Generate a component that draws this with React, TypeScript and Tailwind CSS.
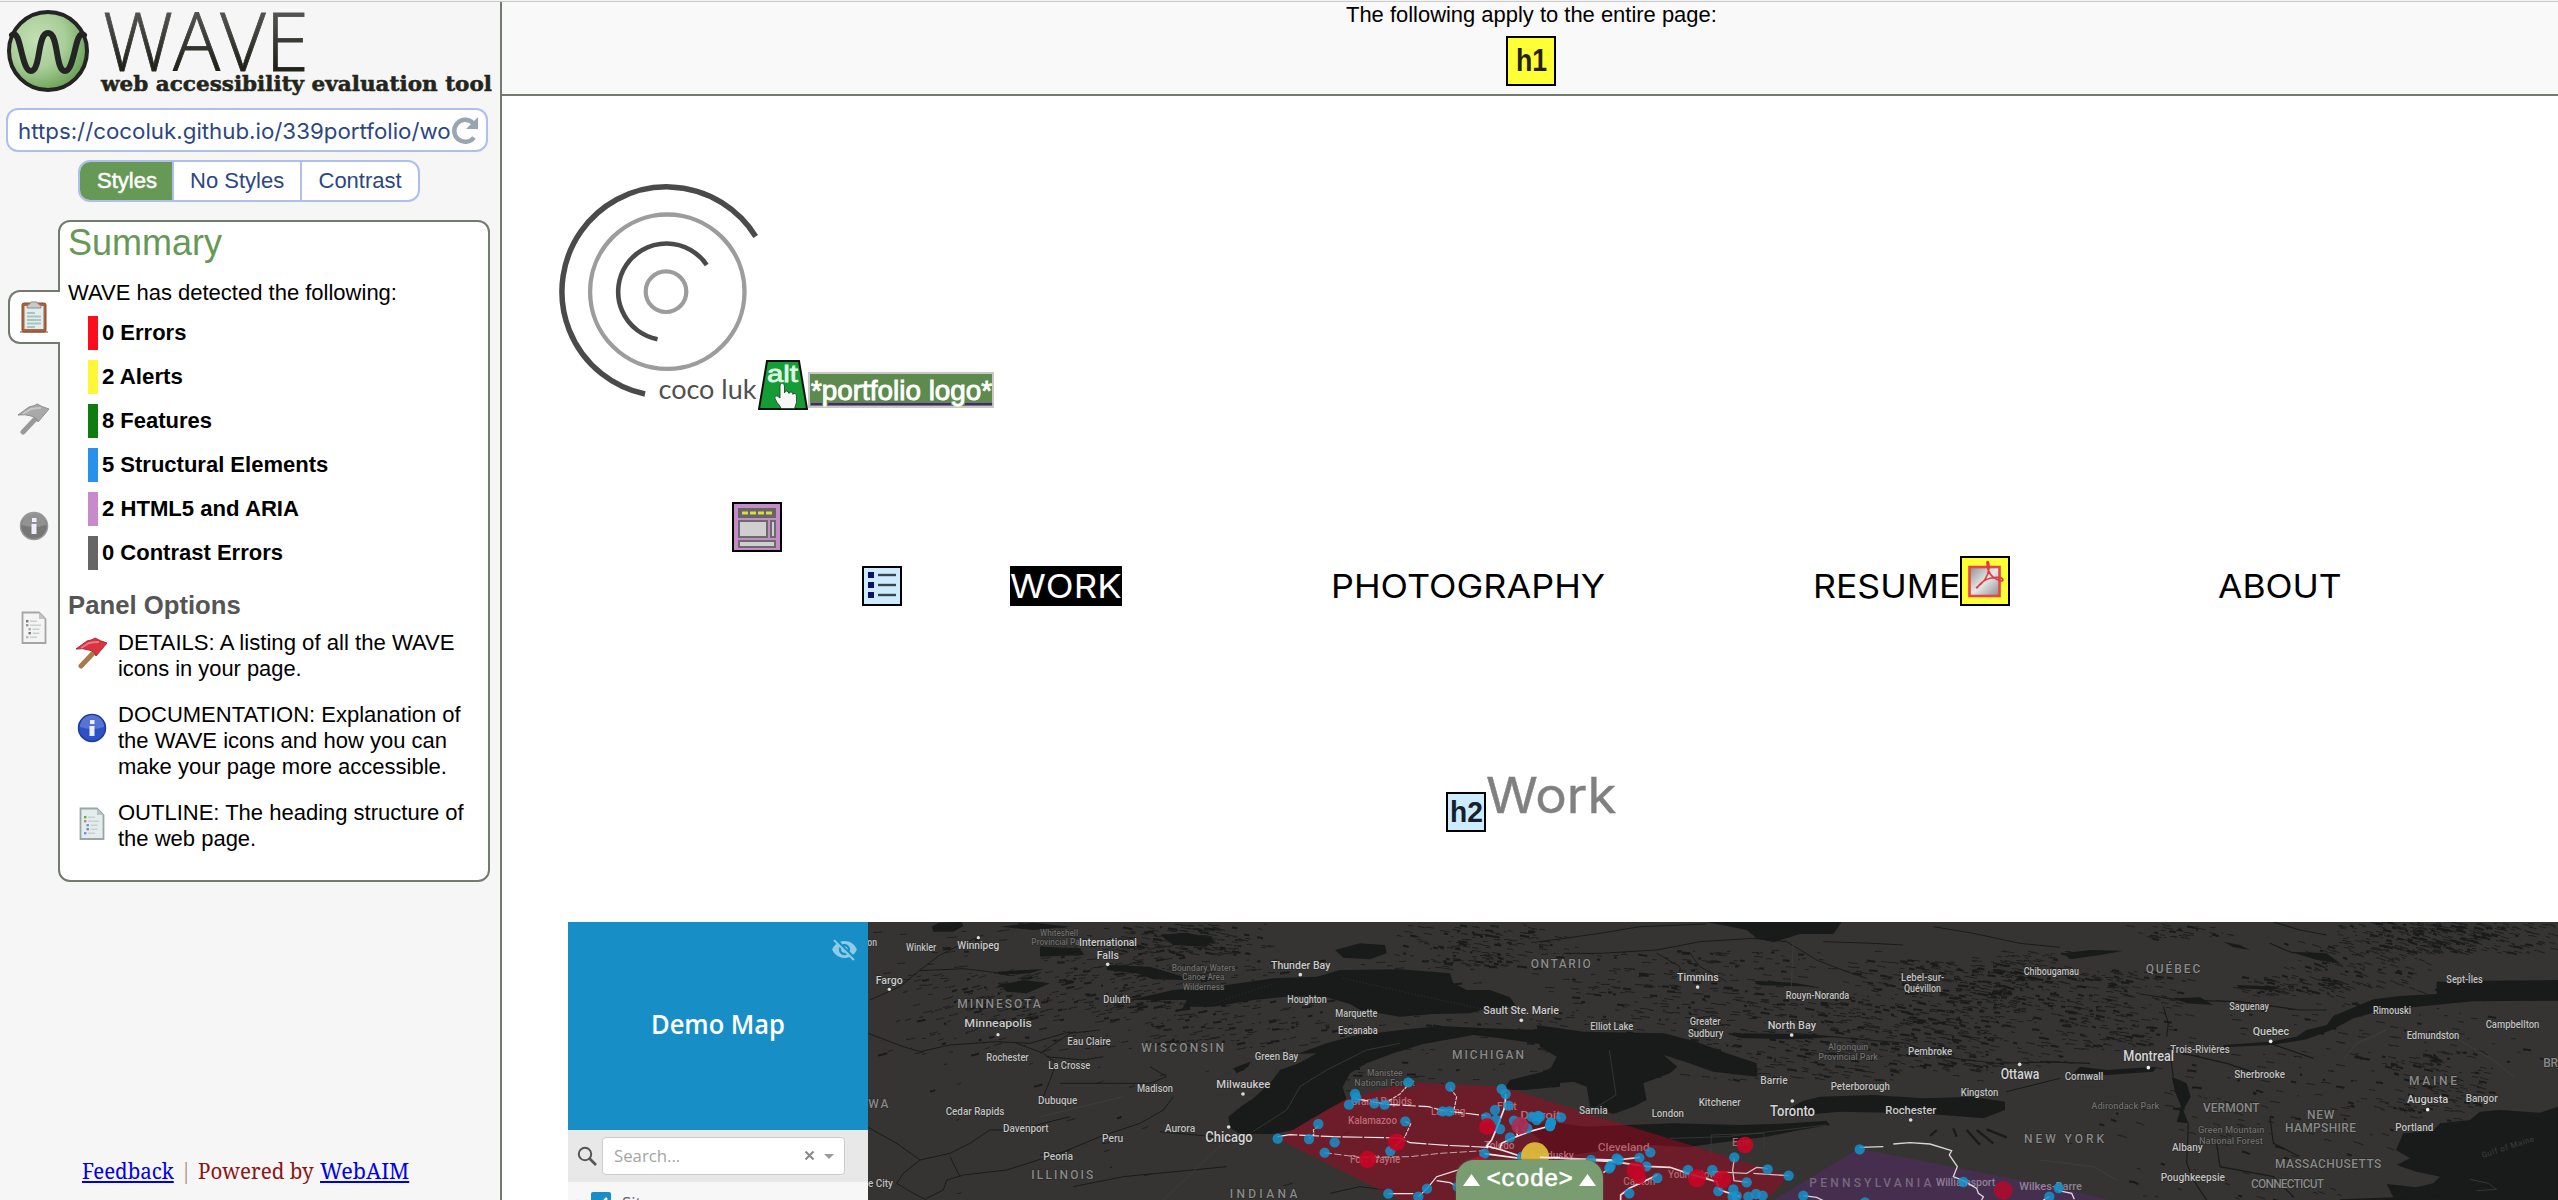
import { useLayoutEffect, useRef, useState } from 'react';
import { MdVisibilityOff } from 'react-icons/md';

/* Single line of text stretched horizontally to an exact width. */
function FitText({ text, width, className = '' }: { text: string; width: number; className?: string }) {
  const ref = useRef<HTMLSpanElement>(null);
  const [scale, setScale] = useState(1);
  useLayoutEffect(() => {
    if (ref.current) setScale(width / ref.current.offsetWidth);
  }, [text, width]);
  return (
    <span className="block shrink-0 whitespace-nowrap" style={{ width }}>
      <span ref={ref} className={`inline-block origin-left ${className}`} style={{ transform: `scaleX(${scale})` }}>
        {text}
      </span>
    </span>
  );
}

function WaveLogo() {
  return (
    <svg width="500" height="102" viewBox="0 0 500 102" className="block">
      <defs>
        <radialGradient id="ball" cx="35%" cy="35%" r="75%">
          <stop offset="0" stopColor="#c3dfb4" />
          <stop offset="0.5" stopColor="#a9cd98" />
          <stop offset="1" stopColor="#5f9a4c" />
        </radialGradient>
        <linearGradient id="word" x1="0" y1="0" x2="0" y2="1">
          <stop offset="0.25" stopColor="#555555" />
          <stop offset="0.75" stopColor="#22231a" />
        </linearGradient>
      </defs>
      <circle cx="48" cy="49" r="39" fill="url(#ball)" stroke="#242424" strokeWidth="4" />
      <path
        d="M12 33 C21 26 21 69 31 69 C41 69 37 31 48 31 C59 31 55 69 65 69 C75 69 75 26 84 33"
        fill="none"
        stroke="#242424"
        strokeWidth="6"
        strokeLinecap="round"
      />
      <text x="103" y="68.500" fontFamily="Open Sans" fontWeight="300" fontSize="82" fill="url(#word)" stroke="url(#word)" strokeWidth="0.800" textLength="206" lengthAdjust="spacingAndGlyphs">
        WAVE
      </text>
      <text x="101" y="89" fontFamily="DejaVu Serif" fontWeight="700" fontSize="21" fill="#24251b" stroke="#24251b" strokeWidth="0.500" textLength="391" lengthAdjust="spacingAndGlyphs">
        web accessibility evaluation tool
      </text>
    </svg>
  );
}

function Reload() {
  return (
    <svg width="28" height="30" viewBox="0 0 28 30" className="block shrink-0">
      <path d="M23 21.500A11 11 0 1 1 22 7" fill="none" stroke="#98a5b3" strokeWidth="4.500" />
      <path d="M27 1V13H15Z" fill="#98a5b3" />
    </svg>
  );
}

function Clipboard() {
  return (
    <svg width="30" height="34" viewBox="0 0 30 34" className="block">
      <path d="M1 32H29" stroke="#aaa" strokeWidth="2" />
      <rect x="3" y="3" width="24" height="29" rx="2" fill="#a9643f" stroke="#8a4b30" />
      <rect x="5.500" y="6" width="19" height="23" fill="#e3eeec" />
      <path d="M8 13h8M8 16.500h14M8 20h14M8 23.500h14M8 27h8" stroke="#a9c5c3" strokeWidth="1.800" />
      <path d="M8 8C8 4 11 5 12 2H18C19 5 22 4 22 8Z" fill="#c9c9cc" stroke="#8b8b90" />
    </svg>
  );
}

function Flag({ cloth, edge, pole }: { cloth: string; edge: string; pole: string }) {
  return (
    <svg width="34" height="32" viewBox="0 0 34 32" className="block">
      <path d="M23 11 L6 29" stroke={pole} strokeWidth="5" strokeLinecap="round" />
      <path d="M1 12 L12 4 Q18 3 20 1 Q25 4 32 6 L21 19 Q20 14 14 13 Q8 11 1 12Z" fill={cloth} stroke={edge} strokeWidth="1" strokeLinejoin="round" />
      <path d="M6 11 L14 6 Q19 5 24 5" fill="none" stroke="#fff" strokeOpacity="0.35" strokeWidth="2" />
    </svg>
  );
}

function Info({ fill, edge }: { fill: string; edge: string }) {
  return (
    <svg width="30" height="30" viewBox="0 0 30 30" className="block">
      <circle cx="15" cy="15" r="13.500" fill={fill} stroke={edge} strokeWidth="1.500" />
      <path d="M3 14A12 12 0 0 1 27 14Q15 18 3 14Z" fill="#fff" fillOpacity="0.2" />
      <path d="M13 7h4.500v4H13zM12.500 13h5v10h-5z" fill="#eef" />
    </svg>
  );
}

function Doc({ color }: { color: boolean }) {
  const marks = color ? ['#5db04e', '#d97a6c', '#6b93e6', '#888', '#6b93e6'] : ['#777', '#999', '#aaa', '#777', '#bbb'];
  return (
    <svg width="26" height="34" viewBox="0 0 26 34" className="block">
      <path d="M1.500 1.500H18L24.500 8V32H1.500Z" fill={color ? '#e4eded' : '#f4f4f4'} stroke={color ? '#98a7a5' : '#a5a5a5'} strokeWidth="1.800" />
      <path d="M18 1.500V8H24.500Z" fill={color ? '#b5c6c4' : '#c4c4c4'} />
      {marks.map((m, i) => (
        <g key={i}>
          <rect x={i > 1 && i < 4 ? 7.5 : 5} y={9 + i * 4} width="2.400" height="2.400" fill={m} />
          <rect x={i > 1 && i < 4 ? 11.5 : 9} y={9.5 + i * 4} width={i === 1 ? 11 : 7} height="1.500" fill="#c9d0d0" />
        </g>
      ))}
    </svg>
  );
}

function AltIcon() {
  return (
    <svg width="50" height="50" viewBox="0 0 50 50" className="block shrink-0">
      <path d="M9 1H41L49 49H1Z" fill="#169c37" stroke="#111" strokeWidth="2" />
      <text x="9" y="22" fontFamily="Liberation Sans" fontWeight="400" fontSize="24" fill="#dff5e3" stroke="#dff5e3" strokeWidth="0.800" textLength="31" lengthAdjust="spacingAndGlyphs">
        alt
      </text>
      <path
        d="M22 26q0-3 2-3t2.500 3v7q0-2 2-2t2.500 2.500q0-1.500 2-1.500t2 2.500q0-1.500 2-1t1.500 3v6q-1 3-2 6H23q-1-3-4-6-3-5-2-6.500 2-1 5 2Z"
        fill="#f7f7f7"
        stroke="#1b3a20"
        strokeWidth="0.800"
      />
    </svg>
  );
}

function RegionIcon() {
  return (
    <svg width="50" height="50" viewBox="0 0 50 50" className="block shrink-0">
      <rect x="1" y="1" width="48" height="48" fill="#c58bc8" stroke="#000" strokeWidth="2" />
      <rect x="6" y="6" width="38" height="10" fill="#666" />
      <path d="M10 11h6M18 11h6M26 11h6M34 11h6" stroke="#dcdc3c" strokeWidth="3" />
      <g fill="#cfcfcf" stroke="#6b6b6b" strokeWidth="2">
        <rect x="7" y="19" width="28" height="16" />
        <rect x="39" y="19" width="4" height="16" />
        <rect x="7" y="39" width="36" height="6" />
      </g>
    </svg>
  );
}

function ListIcon() {
  return (
    <svg width="40" height="40" viewBox="0 0 40 40" className="block shrink-0">
      <rect x="1" y="1" width="38" height="38" fill="#cdebff" stroke="#000" strokeWidth="2" />
      {[9, 19, 29].map((y) => (
        <g key={y}>
          <rect x="6" y={y - 3} width="6" height="6" fill="#10106c" />
          <path d={`M16 ${y}h18`} stroke="#3c4246" strokeWidth="2.400" />
        </g>
      ))}
    </svg>
  );
}

function PdfIcon() {
  return (
    <svg width="50" height="50" viewBox="0 0 50 50" className="block shrink-0">
      <defs>
        <linearGradient id="pdf" x1="0" y1="0" x2="1" y2="1">
          <stop offset="0" stopColor="#8c8c8c" />
          <stop offset="0.5" stopColor="#e8e8e8" />
          <stop offset="1" stopColor="#8c8c8c" />
        </linearGradient>
      </defs>
      <rect x="1" y="1" width="48" height="48" fill="#ffff36" stroke="#000" strokeWidth="2" />
      <rect x="9.500" y="11" width="30" height="29" fill="url(#pdf)" stroke="#e0484d" strokeWidth="2.600" />
      <path d="M16 32Q28 24 29 12Q29 4 27 6Q27 16 33 21Q42 27 43 24Q42 20 31 22Q22 24 17 32" fill="none" stroke="#dc3d45" strokeWidth="1.700" />
    </svg>
  );
}

function CocoLogo() {
  return (
    <svg width="202" height="228" viewBox="556 182 202 228" className="block shrink-0">
      <g fill="none">
        <path d="M755.700 236.500A104.700 104.700 0 1 0 645 394" stroke="#4a4a4a" strokeWidth="5.500" />
        <circle cx="667.300" cy="291.700" r="77.200" stroke="#9c9c9c" strokeWidth="4.300" />
        <path d="M706.700 265A48.300 48.300 0 1 0 657.500 339.200" stroke="#4a4a4a" strokeWidth="4.600" />
        <circle cx="666" cy="291.700" r="20.300" stroke="#9c9c9c" strokeWidth="4.200" />
      </g>
      <text x="658.500" y="398.500" fontFamily="Lato" fontSize="26" fill="#505050" textLength="98" lengthAdjust="spacingAndGlyphs">
        coco luk
      </text>
    </svg>
  );
}

/* ---- map ---- */

const LAND = '#353432';
const WATER = '#191b1a';

type Zone = [number, number, number, number, number, number];
/* x, y, width, height, dash count, slope */
const ZONES: Zone[] = [
  [868, 922, 200, 70, 40, -0.05],
  [900, 972, 170, 50, 110, -0.15],
  [880, 1000, 190, 60, 50, -0.15],
  [1040, 924, 190, 30, 90, 0.1],
  [1040, 945, 160, 65, 170, -0.1],
  [1150, 924, 110, 30, 130, 0.1],
  [1040, 1000, 330, 50, 230, -0.1],
  [1060, 960, 400, 30, 80, -0.05],
  [1400, 924, 160, 45, 170, 0.1],
  [1380, 1010, 240, 45, 70, 0.05],
  [1540, 950, 330, 75, 300, 0.05],
  [1640, 1000, 330, 80, 330, 0.1],
  [1840, 960, 230, 60, 320, 0.1],
  [1960, 950, 110, 60, 170, 0.1],
  [1850, 1020, 200, 50, 220, 0.1],
  [2040, 970, 140, 80, 260, 0.1],
  [2130, 924, 100, 15, 40, 0.1],
  [2330, 922, 228, 30, 340, 0.15],
  [2280, 940, 160, 50, 130, 0.2],
  [2230, 975, 110, 20, 80, 0.15],
  [2170, 1000, 380, 120, 160, 0.1],
  [2380, 1050, 110, 60, 150, 0.15],
  [2080, 1090, 330, 110, 80, 0.2],
  [1280, 1060, 260, 30, 30, 0],
  [868, 1050, 500, 150, 25, -0.2],
];

function terrain() {
  let s = 20177;
  const rnd = () => {
    s = (s * 1103515245 + 12345) % 2147483648;
    return s / 2147483648;
  };
  let thin = '';
  let thick = '';
  for (const [x, y, w, h, n, k] of ZONES) {
    for (let i = 0; i < n; i++) {
      const px = Math.round(x + ((rnd() + rnd()) / 2) * w * 1.2 - w * 0.1);
      const py = Math.round(y + rnd() * h);
      const len = 2 + rnd() * 8;
      const seg = `M${px} ${py + 0.5}l${(len / 2).toFixed(1)} ${((k * len) / 2 + rnd() - 0.5).toFixed(1)}l${(len / 2).toFixed(1)} ${(k * len).toFixed(1)}`;
      if (rnd() > 0.78) thick += seg;
      else thin += seg;
    }
  }
  return { thin, thick };
}
const DASHES = terrain();

type Label = [string, number, number, number, 'c' | 'b' | 'x' | 's' | 'p'];
/* text, left, baseline, width, style; three units to a pixel within each tile */
const SIZES = { c: 30, b: 35, x: 42, s: 36, p: 27 };
const FILLS = { c: '#c2c2c1', b: '#cbcbca', x: '#d6d6d5', s: '#8a8a89', p: '#6e6e6d' };

function Labels({ items }: { items: Label[] }) {
  return (
    <g fontFamily="Roboto" stroke="#222" strokeWidth="3" strokeLinejoin="round" paintOrder="stroke">
      {items.map(([t, x, y, w, k]) => (
        <text
          key={t + x + y}
          x={x}
          y={y}
          fontSize={SIZES[k]}
          fontWeight={500}
          fill={FILLS[k]}
          textLength={w}
          lengthAdjust={k === 's' ? 'spacing' : 'spacingAndGlyphs'}
        >
          {t}
        </text>
      ))}
    </g>
  );
}

const FAR_WEST: Label[] = [
  ['on', 952, 137, 29, 'c'],
  ['Winkler', 1068, 153, 91, 'c'],
  ['Winnipeg', 1222, 147, 126, 'b'],
  ['Fargo', 977, 251, 81, 'b'],
  ['MINNESOTA', 1222, 325, 250, 's'],
  ['Minneapolis', 1243, 382, 203, 'b'],
  ['Rochester', 1309, 483, 127, 'c'],
  ['WA', 955, 624, 60, 's'],
  ['Cedar Rapids', 1187, 646, 176, 'c'],
  ['Davenport', 1359, 695, 137, 'c'],
  ['e City', 954, 860, 75, 'c'],
];
const WEST: Label[] = [
  ['Whiteshell', 0, 79, 114, 'p'],
  ['Provincial Pa', -26, 106, 145, 'p'],
  ['International', 117, 107, 174, 'b'],
  ['Falls', 170, 147, 67, 'b'],
  ['Boundary Waters', 395, 183, 192, 'p'],
  ['Canoe Area', 427, 211, 126, 'p'],
  ['Wilderness', 428, 239, 125, 'p'],
  ['Thunder Bay', 693, 178, 178, 'b'],
  ['Duluth', 190, 279, 81, 'c'],
  ['Houghton', 742, 279, 118, 'c'],
  ['Marquette', 886, 321, 126, 'c'],
  ['Escanaba', 894, 373, 119, 'c'],
  ['Sault Ste. Marie', 1330, 313, 227, 'b'],
  ['ONTARIO', 1472, 175, 180, 's'],
  ['Eau Claire', 82, 406, 130, 'c'],
  ['WISCONSIN', 304, 427, 248, 's'],
  ['La Crosse', 25, 478, 126, 'c'],
  ['Green Bay', 644, 451, 131, 'c'],
  ['MICHIGAN', 1236, 447, 216, 's'],
  ['Madison', 291, 547, 108, 'c'],
  ['Milwaukee', 529, 534, 162, 'b'],
  ['Dubuque', -6, 582, 118, 'c'],
  ['Manistee', 981, 499, 107, 'p'],
  ['National Forest', 943, 528, 183, 'p'],
  ['Aurora', 374, 665, 92, 'c'],
  ['Chicago', 496, 696, 142, 'x'],
  ['Peru', 186, 696, 64, 'c'],
  ['Peoria', 10, 750, 89, 'c'],
  ['ILLINOIS', -26, 808, 186, 's'],
  ['INDIANA', 569, 865, 203, 's'],
];
const WEST_TINTED: Label[] = [
  ['Grand Rapids', 932, 586, 184, 'c'],
  ['Lansing', 1173, 616, 103, 'c'],
  ['Kalamazoo', 924, 643, 147, 'c'],
  ['Fort Wayne', 930, 758, 151, 'c'],
  ['Flint', 1371, 599, 59, 'c'],
  ['Detroit', 1441, 626, 121, 'b'],
  ['Toledo', 1333, 718, 90, 'c'],
  ['Sandusky', 1470, 747, 131, 'c'],
];
const MID: Label[] = [
  ['Timmins', 411, 214, 125, 'b'],
  ['Rouyn-Noranda', 737, 267, 191, 'c'],
  ['Lebel-sur-', 1083, 213, 130, 'c'],
  ['Quévillon', 1092, 247, 111, 'c'],
  ['Chibougamau', 1451, 195, 166, 'c'],
  ['Elliot Lake', 151, 360, 129, 'c'],
  ['Greater', 449, 346, 93, 'c'],
  ['Sudbury', 444, 381, 106, 'c'],
  ['North Bay', 683, 358, 145, 'b'],
  ['Algonquin', 864, 420, 121, 'p'],
  ['Provincial Park', 835, 449, 179, 'p'],
  ['Pembroke', 1104, 434, 133, 'c'],
  ['Ottawa', 1382, 507, 116, 'x'],
  ['Barrie', 661, 522, 82, 'c'],
  ['Peterborough', 872, 540, 178, 'c'],
  ['Kingston', 1262, 559, 113, 'c'],
  ['Kitchener', 476, 589, 126, 'c'],
  ['Sarnia', 117, 612, 86, 'c'],
  ['London', 335, 622, 97, 'c'],
  ['Toronto', 690, 617, 135, 'x'],
  ['Rochester', 1036, 611, 153, 'b'],
  ['NEW YORK', 1452, 698, 240, 's'],
];
const MID_TINTED: Label[] = [
  ['Cleveland', 173, 723, 156, 'b'],
  ['Erie', 576, 709, 55, 'c'],
  ['Canton', 250, 825, 96, 'c'],
  ['Youngstown', 384, 803, 162, 'c'],
  ['PENNSYLVANIA', 808, 832, 366, 's'],
  ['Williamsport', 1188, 827, 178, 'c'],
  ['Wilkes-Barre', 1438, 839, 188, 'c'],
];
const EAST: Label[] = [
  ['QUÉBEC', 317, 190, 164, 's'],
  ['Sept-Îles', 1219, 220, 109, 'c'],
  ['Saguenay', 568, 301, 119, 'c'],
  ['Rimouski', 999, 313, 114, 'c'],
  ['Quebec', 638, 376, 109, 'b'],
  ['Campbellton', 1337, 353, 161, 'c'],
  ['Edmundston', 1100, 386, 158, 'c'],
  ['Trois-Rivières', 391, 430, 178, 'c'],
  ['Montreal', 250, 453, 152, 'x'],
  ['Cornwall', 74, 510, 116, 'c'],
  ['Sherbrooke', 583, 503, 152, 'c'],
  ['BR', 1510, 470, 44, 's'],
  ['MAINE', 1107, 526, 144, 's'],
  ['Augusta', 1101, 580, 124, 'b'],
  ['Bangor', 1277, 576, 96, 'c'],
  ['Adirondack Park', 154, 597, 204, 'p'],
  ['VERMONT', 489, 606, 170, 's'],
  ['NEW', 801, 628, 82, 's'],
  ['HAMPSHIRE', 735, 666, 213, 's'],
  ['Portland', 1066, 662, 114, 'c'],
  ['Green Mountain', 474, 670, 199, 'p'],
  ['National Forest', 477, 701, 192, 'p'],
  ['Albany', 396, 722, 92, 'c'],
  ['MASSACHUSETTS', 705, 773, 319, 's'],
  ['Poughkeepsie', 362, 813, 193, 'c'],
  ['CONNECTICUT', 633, 834, 219, 's'],
];

const WEST_DOTS = [
  [945, 552], [949, 564], [927, 584], [1003, 580], [1034, 584], [1105, 517], [1231, 530], [1208, 604], [1228, 604],
  [1096, 634], [835, 642], [807, 687], [713, 686], [884, 697], [854, 728], [1051, 723], [1385, 537], [1397, 552],
  [1406, 587], [1365, 600], [1339, 622], [1368, 630], [1380, 657], [1422, 632], [1462, 655], [1475, 620], [1494, 618],
  [1490, 630], [1530, 648], [1533, 638], [1410, 682], [1333, 731], [1446, 740], [1045, 851], [1161, 836], [1135, 860],
  [1253, 830],
];
const MID_DOTS = [
  [0, 620], [63, 622], [30, 648], [33, 638], [153, 750], [230, 745], [236, 750], [212, 768], [208, 775], [298, 744], [331, 727],
  [319, 769], [352, 804], [268, 850], [444, 780], [517, 780], [583, 742], [620, 817], [683, 778], [746, 797], [535, 843],
  [580, 838], [578, 860], [590, 858], [625, 860], [648, 852], [668, 857], [959, 718], [790, 857], [975, 877], [1270, 816],
  [1528, 860], [1556, 834],
];

function MapCanvas() {
  return (
    <svg width="1690" height="278" viewBox="868 922 1690 278" className="block shrink-0">
      <rect x="868" y="922" width="1690" height="278" fill={LAND} />
      <path d={DASHES.thin} fill="none" stroke="#1e1f1e" strokeWidth="1" />
      <path d={DASHES.thick} fill="none" stroke={WATER} strokeWidth="2" />

      <g transform="translate(550 900) scale(0.33333)" fill={WATER}>
        <path d="M1145 80L1165 68L1235 66L1240 78L1210 95L1150 95ZM1340 215L1480 207L1440 220L1350 224ZM1350 255L1420 240L1500 250L1430 280L1370 275ZM1350 80L1450 68L1560 80L1450 90Z" />
        <path
          d="M960 300L1050 260L1110 210L1170 165L1240 130L1300 105M1110 212L1240 206L1340 218M954 400L1060 440L1110 455L1200 435L1340 425L1440 430L1560 395M954 682L1040 730L1110 780L1060 820L1040 850L1090 880L1130 900M1130 895L1180 870L1190 840L1240 825L1370 810L1560 750M1110 780L1200 760L1260 730L1320 690L1400 690L1560 650M1200 770L1230 830M1400 430L1480 460L1520 490L1480 590"
          fill="none"
          stroke={WATER}
          strokeWidth="3"
        />
      </g>

      <g transform="translate(1040 910) scale(0.33333)" fill={WATER}>
        <path d="M270 270L400 240L560 225L700 205L830 200L900 180L1080 178L1230 190L1240 220L1280 240L1350 240L1410 262L1430 290L1330 298L1290 310L1180 312L1080 320L960 300L930 282L860 262L760 258L640 270L520 290L430 290L440 270Z" />
        <path d="M885 120L960 100L1035 105L1040 130L990 148L910 143Z" />
        <path d="M200 165L330 170L430 200L560 200L520 212L340 208L290 190L200 180Z" />
        <path d="M0 110L120 115L130 135L0 140ZM360 75L440 68L520 85L500 110L400 105Z" />
        <path d="M565 620L605 588L640 565L690 520L720 480L780 458L830 430L770 432L860 400L940 378L1080 360L1200 348L1340 355L1560 362V410L1380 385L1300 375L1150 402L1060 430L980 460L930 490L908 530L920 570L860 600L760 660L700 672L600 672L572 655Z" />
        <path d="M580 475L630 455L625 470L590 490Z" />
        <path d="M1395 540L1410 515L1480 500L1530 475L1560 470V530L1450 540Z" />
        <path
          d="M0 430L30 410L90 370L180 360M20 440L130 450L190 440M330 470L380 500L330 520L230 520L60 520M400 560L370 600L300 640L180 680L60 730L0 735M360 665L520 680M100 830L250 800L560 770M870 850L960 830L1040 840"
          fill="none"
          stroke={WATER}
          strokeWidth="3"
        />
        <path d="M0 620L250 560M370 870L560 690M640 664L740 600L780 530L860 480L980 420L1080 400" fill="none" stroke="#414240" strokeWidth="2" />
        <path d="M520 280L700 222M910 205L1110 250L1330 298" fill="none" stroke="#3b3c3b" strokeWidth="2" strokeDasharray="3 7" />
      </g>

      <g transform="translate(1540 910) scale(0.33333)" fill={WATER}>
        <path d="M500 36H905L880 72L780 72L700 97L650 85L620 60Z" />
        <path d="M-10 345L130 365L370 370L470 395L560 430L650 460L652 500L520 485L420 450L370 435L412 470L390 490L310 520L320 570L280 590L220 612L150 590L140 530L100 515L-60 530L-110 540L-90 510L30 480L50 440L0 410Z" />
        <path d="M560 370L760 372L900 380L760 388L600 384ZM640 212L760 218L830 230L660 226Z" />
        <path d="M-60 640L60 640L140 650L260 645L400 640L600 645L750 640L860 632L870 645L780 660L680 680L560 695L440 712L340 705L200 720L60 740L-40 730L0 690Z" />
        <path d="M740 600L790 572L840 560L1000 555L1150 565L1300 560L1395 575L1395 600L1330 625L1170 612L1050 608L900 605L760 617Z" />
        <path d="M1280 660L1320 705M1310 660L1360 700M1340 658L1400 682M1240 655L1250 680M1190 660L1170 678" stroke={WATER} strokeWidth="7" />
        <path
          d="M0 95L180 70L300 50L500 42M70 130L180 130L350 120L480 95L640 85L740 95L830 150L920 185L980 205M350 130L420 170L420 190M450 130L480 170L560 215M850 95L1000 100L1090 105M1180 50L1300 70L1440 100L1560 112M760 370L1100 400L1200 440L1370 460L1560 455M1400 545L1560 505"
          fill="none"
          stroke={WATER}
          strokeWidth="3"
        />
        <path d="M760 100L752 270M208 420L228 555L140 610M512 740L514 675L672 670L672 720M390 685L560 680L860 645" fill="none" stroke="#3f403e" strokeWidth="2" />
      </g>

      <g transform="translate(2040 910) scale(0.33333)" fill={WATER}>
        <path d="M1554 210L1330 212L1190 215L1190 252L1080 258L1000 268L880 318L860 345L800 360L770 380L690 395L550 405V412L700 404L800 388L880 358L940 325L1030 300L1130 290L1300 274L1554 272Z" />
        <path d="M1554 590L1500 608L1380 600L1320 605L1290 630L1200 640L1180 662L1090 670L1068 720L1110 745L1070 765L1130 785L1200 800L1180 820L1130 832L1040 822L1060 862L900 868V872H1554Z" />
        <path d="M395 500L440 520L452 560L430 600L445 640L410 636L424 590L405 545Z" />
        <path d="M70 130L150 120L250 122L180 135L90 148ZM400 265L480 262L520 285L440 280ZM550 95L600 105L630 120L580 112ZM750 125L860 130L900 160L830 150ZM590 225L720 230L700 240L600 235Z" />
        <path d="M120 470L200 480L350 470L340 485L200 495L100 490Z" />
        <path
          d="M300 252L420 270L600 275L780 300L860 300M0 455L150 460M430 430L560 460L650 490M690 400L820 445M370 290L385 340L380 380M445 640L440 760L460 810L500 870M390 430L400 500M700 36L780 60L860 75M690 100L760 130M530 700L540 770L700 800L760 860M690 620L700 700L780 740M1040 870L1300 850"
          fill="none"
          stroke={WATER}
          strokeWidth="3.500"
        />
        <path d="M1290 808L1345 820L1370 838L1310 842" fill="none" stroke="#353432" strokeWidth="3" />
        <path d="M910 450L950 400L1040 360M1240 380L1360 450L1420 500M0 750L160 770L230 810" fill="none" stroke="#434442" strokeWidth="2" />
        <text x="1328" y="744" fontFamily="Roboto" fontSize="24" fill="#3e3f3e" transform="rotate(-18 1328 744)" textLength="164">
          Gulf of Maine
        </text>
      </g>

      <path d="M1277.600 1138.700L1346.500 1098.500L1408 1082.300L1502 1086.600L1788.700 1175.600L1780 1186L1766 1200H1400L1388 1194Z" fill="#a00a20" fillOpacity="0.520" />
      <path d="M1859 1148.500L2060 1188L2108 1200H1774Z" fill="#4e2d5c" fillOpacity="0.680" />

      <g transform="translate(550 900) scale(0.33333)">
        <Labels items={FAR_WEST} />
        {[[1285, 113], [1018, 268], [1344, 404]].map(([x, y]) => (
          <circle key={x} cx={x} cy={y} r="5" fill="#ddd" />
        ))}
      </g>
      <g transform="translate(2040 910) scale(0.33333)">
        <Labels items={EAST} />
        {[[325, 473], [692, 394], [1163, 599]].map(([x, y]) => (
          <circle key={x} cx={x} cy={y} r="5.500" fill="#eee" />
        ))}
      </g>

      <g transform="translate(1040 910) scale(0.33333)">
        <Labels items={WEST} />
        {[[203, 163], [781, 194], [1444, 331], [609, 552], [566, 651]].map(([x, y]) => (
          <circle key={x} cx={x} cy={y} r="5.500" fill="#ddd" />
        ))}
        <g fill="#d07a86" fontFamily="Roboto" fontWeight="500" fillOpacity="0.850">
          {WEST_TINTED.map(([t, x, y, w, k]) => (
            <text key={t} x={x} y={y} fontSize={SIZES[k]} textLength={w} lengthAdjust="spacingAndGlyphs">
              {t}
            </text>
          ))}
        </g>
        <g fill="none" stroke="#fff" strokeWidth="3.500" strokeOpacity="0.900">
          <path d="M713 680L750 674L880 680L1080 684L1110 698L1220 706L1345 712" strokeDasharray="60 5" />
          <path d="M945 566L1040 583L1165 590L1210 602L1339 617" strokeDasharray="40 8" />
          <path d="M854 728L960 742L1110 740L1200 730L1333 722" strokeOpacity="0.600" strokeWidth="3" strokeDasharray="22 7" />
          <path d="M1034 580L1080 552L1105 524M1231 535L1250 560L1242 600M835 648L820 660L822 672L807 687M1096 634L1112 642L1095 680L1051 723" strokeOpacity="0.750" strokeDasharray="12 3" />
          <path d="M1397 552L1395 590L1372 650L1355 690L1340 708L1385 720L1440 738M1333 731L1440 745L1560 742M1380 715L1385 700L1410 688L1470 664L1530 648M1430 650L1432 680" strokeWidth="5" />
          <path d="M1161 836L1190 800L1260 778M1135 860L1161 836M1045 851H1120M1190 812L1230 818L1253 830" />
        </g>
        <g fill="#1592cc" fillOpacity="0.840">
          {WEST_DOTS.map(([x, y], i) => (
            <circle key={i} cx={x} cy={y} r="15.500" />
          ))}
        </g>
        <g fill="#c50526" fillOpacity="0.920">
          <circle cx="1342" cy="650" r="25" />
          <circle cx="1070" cy="696" r="26" />
          <circle cx="983" cy="748" r="26" />
          <circle cx="1316" cy="765" r="26" />
          <circle cx="1440" cy="647" r="26" fill="#a83058" />
        </g>
        <circle cx="1485" cy="739" r="42" fill="#deba3a" fillOpacity="0.950" />
      </g>

      <g transform="translate(1540 910) scale(0.33333)">
        <Labels items={MID} />
        {[[473, 231], [755, 375], [1439, 463], [757, 573], [1112, 630]].map(([x, y]) => (
          <circle key={x} cx={x} cy={y} r="5.500" fill="#ddd" />
        ))}
        <g fontFamily="Roboto" fontWeight="500" fillOpacity="0.850">
          {MID_TINTED.map(([t, x, y, w, k], i) => (
            <text
              key={t}
              x={x}
              y={y}
              fontSize={SIZES[k]}
              fill={i < 4 ? '#c5747f' : k === 's' ? '#7f7388' : '#9f92a6'}
              textLength={w}
              lengthAdjust={k === 's' ? 'spacing' : 'spacingAndGlyphs'}
            >
              {t}
            </text>
          ))}
        </g>
        <g fill="none" stroke="#fff" strokeWidth="4" strokeOpacity="0.850">
          <path d="M0 742L153 748L230 750L300 742M60 745L220 755L319 769L390 772L444 790L530 815L540 840L600 860" strokeWidth="5" />
          <path d="M583 745L578 780L582 812L625 817M517 785L620 790L650 772L683 775M640 790L746 797" strokeOpacity="0.700" />
          <path d="M352 795L300 820L268 835L242 855V870M208 775L190 788" strokeWidth="5" />
          <path d="M959 712L1030 710M1060 702L1110 698L1170 702L1235 722L1228 735L1252 770L1240 800L1270 812L1310 835L1315 850L1330 860L1325 870M790 857L830 862L850 872" strokeOpacity="0.800" />
          <path d="M1528 860L1510 870M1556 842L1595 850L1603 868" />
        </g>
        <g fill="#1592cc" fillOpacity="0.840">
          {MID_DOTS.map(([x, y], i) => (
            <circle key={i} cx={x} cy={y} r="15.500" />
          ))}
        </g>
        <g fill="#c50526" fillOpacity="0.900">
          <circle cx="615" cy="705" r="25" />
          <circle cx="288" cy="782" r="28" />
          <circle cx="298" cy="802" r="20" />
          <circle cx="471" cy="805" r="27" />
          <circle cx="547" cy="808" r="27" />
          <circle cx="1390" cy="841" r="28" fillOpacity="0.750" />
        </g>
      </g>
    </svg>
  );
}

function MapSidebar() {
  return (
    <div className="flex h-full w-[300px] shrink-0 flex-col overflow-hidden bg-[#f7f7f7] font-['Open_Sans',sans-serif]">
      <div className="flex h-[208px] shrink-0 flex-col bg-[#178fc6]">
        <div className="flex h-[41px] items-end justify-end pr-[10px]">
          <MdVisibilityOff className="size-[27px] text-[#8fcbe6]" />
        </div>
        <div className="flex justify-center pt-[41px]">
          <FitText text="Demo Map" width={134} className="text-[27px] leading-[40px] font-semibold text-white" />
        </div>
      </div>
      <div className="flex h-[52px] shrink-0 items-center bg-[#e8e8e8] pl-[9px]">
        <svg width="21" height="21" viewBox="0 0 21 21" className="block">
          <circle cx="8" cy="8" r="6.200" fill="none" stroke="#555" strokeWidth="2" />
          <path d="M12.500 12.500L19 19" stroke="#555" strokeWidth="2.600" />
        </svg>
        <div className="ml-[4px] flex h-[38px] w-[243px] items-center rounded border border-[#ccc] bg-white pl-[11px]">
          <FitText text="Search..." width={66} className="text-[17px] leading-[22px] text-[#a4a4a4]" />
          <svg width="30" height="12" viewBox="0 0 30 12" className="ml-[124px] block">
            <path d="M1.500 1.500L9.500 9.500M9.500 1.500L1.500 9.500" stroke="#888" strokeWidth="2" />
            <path d="M20 4H30L25 9Z" fill="#999" />
          </svg>
        </div>
      </div>
      <div className="flex items-start pt-[10px] pl-[8px]">
        <svg width="12" height="12" viewBox="0 0 12 12" className="block">
          <path d="M1 8L6 11L11 8" stroke="#ddd" fill="none" strokeWidth="2" />
        </svg>
        <svg width="20" height="20" viewBox="0 0 20 20" className="ml-[3px] block">
          <rect width="20" height="20" rx="2" fill="#178fc6" />
          <path d="M4 10L8 14L16 6" stroke="#fff" strokeWidth="2.500" fill="none" />
        </svg>
        <span className="ml-[11px] text-[17px] leading-[22px] text-[#666]">Sites</span>
      </div>
    </div>
  );
}

const COUNTS: [string, string][] = [
  ['0 Errors', 'bg-[#fb0d1b]'],
  ['2 Alerts', 'bg-[#fff635]'],
  ['8 Features', 'bg-[#0f7c12]'],
  ['5 Structural Elements', 'bg-[#2692ec]'],
  ['2 HTML5 and ARIA', 'bg-[#c78bc9]'],
  ['0 Contrast Errors', 'bg-[#666666]'],
];
const COUNT_WIDTHS = [84, 81, 110, 226, 197, 181];

function Sidebar() {
  return (
    <aside className="flex w-[502px] shrink-0 flex-col border-r-2 border-[#737a70] bg-[#f6f6f6]">
      <div className="h-[106px] shrink-0">
        <WaveLogo />
      </div>
      <div className="ml-[6px] flex h-[44px] w-[482px] shrink-0 items-center rounded-[12px] border-2 border-[#aebfee] bg-white pl-[10px]">
        <div className="pt-[3px]">
          <FitText text="https://cocoluk.github.io/339portfolio/wo" width={433} className="font-['Inter',sans-serif] text-[22px] leading-[37px] text-[#2c4682]" />
        </div>
        <div className="pt-[2px]">
          <Reload />
        </div>
      </div>
      <div className="mt-[8px] ml-[78px] flex h-[42px] w-[342px] shrink-0 overflow-hidden rounded-[12px] border-2 border-[#aebfee] bg-white text-[22px] leading-[38px] text-[#2c4682]">
        <div className="flex w-[94px] justify-center border-r-2 border-[#aebfee] bg-[#659955] pl-[2px] text-white">
          <FitText text="Styles" width={60} className="[-webkit-text-stroke:0.5px_white]" />
        </div>
        <div className="flex w-[128px] justify-center border-r-2 border-[#aebfee]">
          <FitText text="No Styles" width={94} />
        </div>
        <div className="flex flex-1 justify-center">
          <FitText text="Contrast" width={83} />
        </div>
      </div>

      <div className="mt-[18px] flex shrink-0">
        <div className="flex w-[58px] shrink-0 flex-col pl-[8px]">
          <div className="relative z-10 mt-[70px] -mr-[2px] flex h-[54px] items-center rounded-l-[12px] border-2 border-r-0 border-[#737a70] bg-white pl-[9px]">
            <Clipboard />
          </div>
          <div className="mt-[59px] ml-[9px]">
            <Flag cloth="#a9a9a9" edge="#8c8c8c" pole="#999" />
          </div>
          <div className="mt-[76px] ml-[11px]">
            <Info fill="#777" edge="#999" />
          </div>
          <div className="mt-[70px] ml-[13px]">
            <Doc color={false} />
          </div>
        </div>

        <section className="h-[662px] w-[432px] shrink-0 rounded-[12px] border-2 border-[#737a70] bg-white pl-[8px] text-[22px] text-black">
          <h2 className="text-[36px] leading-[42px] text-[#659955]">
            <FitText text="Summary" width={154} />
          </h2>
          <div className="mt-[16px] leading-[26px]">
            <FitText text="WAVE has detected the following:" width={329} />
          </div>
          <ul className="mt-[10px] flex flex-col gap-[10px] pl-[20px]">
            {COUNTS.map(([label, color], i) => (
              <li key={label} className="flex h-[34px] items-center gap-[4px] leading-[32px] font-bold">
                <span className={`h-[34px] w-[10px] ${color}`} />
                <FitText text={label} width={COUNT_WIDTHS[i]} />
              </li>
            ))}
          </ul>
          <h3 className="mt-[20px] text-[26px] leading-[30px] font-bold text-[#555]">
            <FitText text="Panel Options" width={173} />
          </h3>
          <div className="mt-[10px] flex flex-col gap-[20px] leading-[26px]">
            <div className="flex">
              <div className="w-[50px] shrink-0 pt-[7px] pl-[7px]">
                <Flag cloth="#d93440" edge="#b3222e" pole="#a87a4b" />
              </div>
              <div>
                <FitText text="DETAILS: A listing of all the WAVE" width={337} />
                <FitText text="icons in your page." width={184} />
              </div>
            </div>
            <div className="flex">
              <div className="w-[50px] shrink-0 pt-[11px] pl-[9px]">
                <Info fill="#2c52c6" edge="#20399a" />
              </div>
              <div>
                <FitText text="DOCUMENTATION: Explanation of" width={343} />
                <FitText text="the WAVE icons and how you can" width={329} />
                <FitText text="make your page more accessible." width={329} />
              </div>
            </div>
            <div className="flex">
              <div className="w-[50px] shrink-0 pt-[7px] pl-[11px]">
                <Doc color />
              </div>
              <div>
                <FitText text="OUTLINE: The heading structure of" width={346} />
                <FitText text="the web page." width={138} />
              </div>
            </div>
          </div>
        </section>
      </div>

      <footer className="mt-auto mb-[15px] ml-[82px] flex gap-[9px] font-['Noto_Serif','Liberation_Serif',serif] text-[22px] leading-[30px] text-[#8c1515]">
        <a className="text-[#0000e8]">
          <FitText text="Feedback" width={92} className="underline" />
        </a>
        <FitText text="|" width={6} />
        <FitText text="Powered by" width={116} />
        <a className="-ml-[3px] text-[#0000e8]">
          <FitText text="WebAIM" width={89} className="underline" />
        </a>
      </footer>
    </aside>
  );
}

function NavWord({ text, width, className = '' }: { text: string; width: number; className?: string }) {
  return (
    <div className={`h-[40px] shrink-0 ${className}`}>
      <FitText text={text} width={width} className="font-['Inter',sans-serif] text-[32.500px] leading-[42px]" />
    </div>
  );
}

export default function App() {
  return (
    <div className="flex h-[1200px] w-[2558px] flex-col overflow-hidden bg-white font-['Liberation_Sans',sans-serif]">
      <div className="h-[2px] shrink-0 border-b border-[#cbcbcb] bg-[#f2f2f2]" />
      <div className="flex min-h-0 flex-1">
        <Sidebar />
        <main className="relative flex min-w-0 flex-1 flex-col">
          <header className="flex h-[94px] shrink-0 flex-col items-center border-b-2 border-[#737a70] bg-[#f9f9f9] pl-[2px] text-[22px] leading-[26px]">
            <FitText text="The following apply to the entire page:" width={371} />
            <div className="mt-[8px] flex size-[50px] items-center justify-center border-2 border-black bg-[#ffff36] text-black">
              <FitText text="h1" width={31} className="text-[31px] leading-[44px] font-bold text-[#222200]" />
            </div>
          </header>

          <div className="mt-[86px] ml-[54px] flex shrink-0 items-end">
            <CocoLogo />
            <AltIcon />
            <div className="mb-[2px] flex h-[36px] w-[186px] justify-center border-2 border-[#c8c8c8] bg-[#5d8a4d] text-white">
              <FitText
                text="*portfolio logo*"
                width={181}
                className="text-[28px] leading-[33px] underline decoration-[#551a8b] decoration-2 underline-offset-[3px] [-webkit-text-stroke:0.9px_white]"
              />
            </div>
          </div>

          <div className="mt-[92px] ml-[230px]">
            <RegionIcon />
          </div>

          <nav className="mt-[4px] ml-[360px] flex h-[50px] shrink-0 items-end text-black">
            <ListIcon />
            <NavWord text="WORK" width={112} className="ml-[108px] bg-black text-white" />
            <NavWord text="PHOTOGRAPHY" width={274} className="ml-[209px]" />
            <NavWord text="RESUME" width={147} className="ml-[208px]" />
            <PdfIcon />
            <NavWord text="ABOUT" width={124} className="ml-[208px]" />
          </nav>

          <div className="mt-[156px] flex h-[70px] shrink-0 items-end justify-center pl-[2px]">
            <div className="flex size-[40px] items-center justify-center border-2 border-black bg-[#cdebff]">
              <FitText text="h2" width={33} className="text-[29px] leading-[36px] font-bold text-[#15202a]" />
            </div>
            <div className="mb-[6px]">
              <FitText text="Work" width={130} className="font-['Inter',sans-serif] text-[49px] leading-[60px] text-[#808080] [-webkit-text-stroke:0.4px_#808080]" />
            </div>
          </div>

          <div className="mt-auto ml-[66px] flex h-[278px] shrink-0">
            <MapSidebar />
            <MapCanvas />
          </div>

          <div className="absolute bottom-0 left-[954px] flex h-[40px] w-[147px] justify-between rounded-t-[18px] bg-[#799d70] px-[7px] pt-[8px] text-white shadow-[0_0_3px_#555]">
            <svg width="17" height="24" viewBox="0 0 17 24" className="block">
              <path d="M8.500 6L17 18H0Z" fill="#fff" />
            </svg>
            <FitText text="<code>" width={86} className="font-['Liberation_Mono',monospace] text-[24px] leading-[24px] [-webkit-text-stroke:0.6px_white]" />
            <svg width="17" height="24" viewBox="0 0 17 24" className="block">
              <path d="M8.500 6L17 18H0Z" fill="#fff" />
            </svg>
          </div>
        </main>
      </div>
    </div>
  );
}
